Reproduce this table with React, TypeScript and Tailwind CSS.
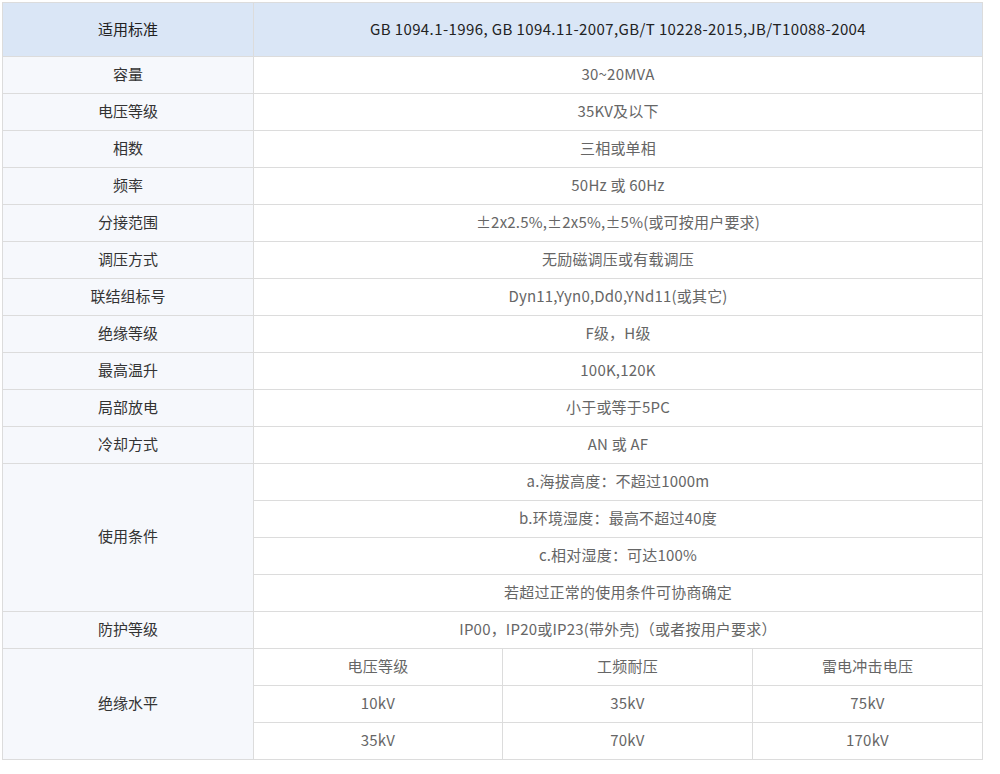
const rows: [string, string][] = [
  ["容量", "30~20MVA"],
  ["电压等级", "35KV及以下"],
  ["相数", "三相或单相"],
  ["频率", "50Hz 或 60Hz"],
  ["分接范围", "±2x2.5%,±2x5%,±5%(或可按用户要求)"],
  ["调压方式", "无励磁调压或有载调压"],
  ["联结组标号", "Dyn11,Yyn0,Dd0,YNd11(或其它)"],
  ["绝缘等级", "F级，H级"],
  ["最高温升", "100K,120K"],
  ["局部放电", "小于或等于5PC"],
  ["冷却方式", "AN 或 AF"],
]

const conditions = [
  "a.海拔高度：不超过1000m",
  "b.环境湿度：最高不超过40度",
  "c.相对湿度：可达100%",
  "若超过正常的使用条件可协商确定",
]

const insulation = [
  ["电压等级", "工频耐压", "雷电冲击电压"],
  ["10kV", "35kV", "75kV"],
  ["35kV", "70kV", "170kV"],
]

const label = "border border-[#dcdcdc] bg-[#f6f8fc] text-[#333] text-center align-middle h-[37px] px-0 pt-0 pb-[2px]"
const value = "border border-[#dcdcdc] bg-white text-[#666] text-center align-middle h-[37px] px-0 pt-0 pb-[2px] tracking-[0.2px]"

export default function App() {
  return (
    <div className="min-h-screen bg-white pt-[2px] pl-[2px] font-['Noto_Sans_CJK_SC',sans-serif] text-[15px]">
      <table className="w-[980px] border-collapse table-fixed">
        <colgroup>
          <col className="w-[251px]" />
          <col className="w-[249px]" />
          <col className="w-[250px]" />
          <col className="w-[230px]" />
        </colgroup>
        <tbody>
          <tr>
            <td className="border border-[#dcdcdc] bg-[#dae6f6] text-[#222] text-center h-[54px] p-0">适用标准</td>
            <td colSpan={3} className="border border-[#dcdcdc] bg-[#dae6f6] text-[#222] text-center h-[54px] p-0 tracking-[0.4px]">
              GB 1094.1-1996, GB 1094.11-2007,GB/T 10228-2015,JB/T10088-2004
            </td>
          </tr>
          {rows.map(([k, v]) => (
            <tr key={k}>
              <td className={label}>{k}</td>
              <td colSpan={3} className={value}>{v}</td>
            </tr>
          ))}
          {conditions.map((c, i) => (
            <tr key={c}>
              {i === 0 && (
                <td rowSpan={4} className={label}>使用条件</td>
              )}
              <td colSpan={3} className={value}>{c}</td>
            </tr>
          ))}
          <tr>
            <td className={label}>防护等级</td>
            <td colSpan={3} className={value}>IP00，IP20或IP23(带外壳)（或者按用户要求）</td>
          </tr>
          {insulation.map((r, i) => (
            <tr key={i}>
              {i === 0 && (
                <td rowSpan={3} className={label}>绝缘水平</td>
              )}
              {r.map((c, j) => (
                <td key={j} className={value}>{c}</td>
              ))}
            </tr>
          ))}
        </tbody>
      </table>
    </div>
  )
}
